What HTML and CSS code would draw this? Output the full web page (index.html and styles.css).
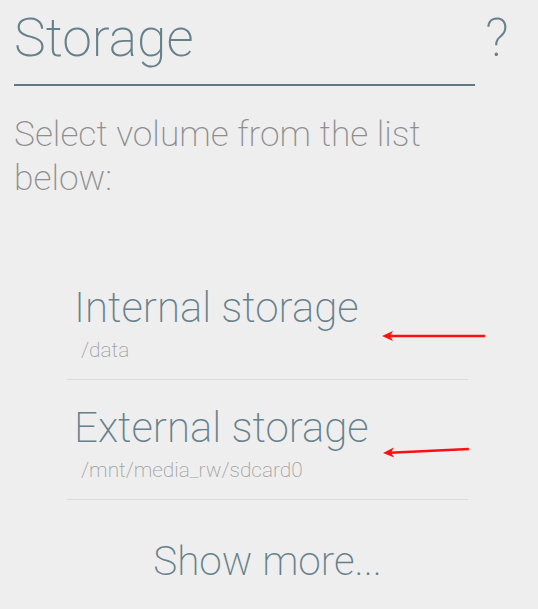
FILE: index.html
```html
<!DOCTYPE html>
<html>
<head>
<meta charset="utf-8">
<link rel="stylesheet" href="styles.css">
</head>
<body>
<div class="page">
  <header class="header">
    <h1 class="title">Storage</h1>
    <span class="help">?</span>
  </header>
  <p class="intro">Select volume from the list below:</p>
  <ul class="volumes">
    <li class="volume">
      <div class="vol-name">Internal storage</div>
      <div class="vol-path">/data</div>
    </li>
    <li class="volume">
      <div class="vol-name">External storage</div>
      <div class="vol-path">/mnt/media_rw/sdcard0</div>
    </li>
  </ul>
  <div class="more">Show more...</div>
</div>
<svg class="annotations" width="538" height="609" viewBox="0 0 538 609">
  <g transform="translate(382,336)">
    <line x1="7" y1="0" x2="103" y2="0" stroke="#ff1010" stroke-width="2.6"/>
    <polygon points="0,0 11,-5 8,0 11,5" fill="#ff1010"/>
  </g>
  <g transform="translate(383,453) rotate(-2.66)">
    <line x1="7" y1="0" x2="86" y2="0" stroke="#ff1010" stroke-width="2.6"/>
    <polygon points="0,0 11,-5 8,0 11,5" fill="#ff1010"/>
  </g>
</svg>
</body>
</html>
```
FILE: styles.css
```css
html, body {
  margin: 0;
  padding: 0;
  background: #eeeeee;
}
body {
  width: 538px;
  height: 609px;
  overflow: hidden;
  position: relative;
  font-family: Roboto, "Liberation Sans", sans-serif;
  font-weight: 200;
}
.page {
  padding: 6px 0 0 14px;
}
.header {
  display: flex;
  align-items: flex-start;
}
.title {
  margin: 0;
  width: 461px;
  flex: 0 0 461px;
  font-size: 53.5px;
  font-weight: 200;
  line-height: 64px;
  color: #67818c;
  padding-bottom: 14px;
  border-bottom: 2px solid #5f7984;
}
.help {
  margin-left: 10px;
  font-size: 53.5px;
  line-height: 64px;
  color: #67818c;
}
.intro {
  margin: 26px 0 0 0;
  width: 470px;
  font-size: 35.3px;
  line-height: 44px;
  color: #8e8e8e;
}
.volumes {
  list-style: none;
  margin: 60px 0 0 53px;
  padding: 0;
  width: 401px;
}
.volume {
  padding: 23px 0 17px 0;
  border-bottom: 1px solid #dcdcdc;
}
.vol-name {
  padding-left: 7px;
  font-size: 42px;
  line-height: 50px;
  color: #67818c;
}
.vol-path {
  margin-top: 5px;
  padding-left: 14px;
  font-size: 20.8px;
  line-height: 24px;
  color: #a0a0a0;
}
.more {
  width: 401px;
  margin: 36px 0 0 53px;
  text-align: center;
  font-size: 40.5px;
  line-height: 50px;
  color: #67818c;
}
.annotations {
  position: absolute;
  left: 0;
  top: 0;
  pointer-events: none;
}
```
